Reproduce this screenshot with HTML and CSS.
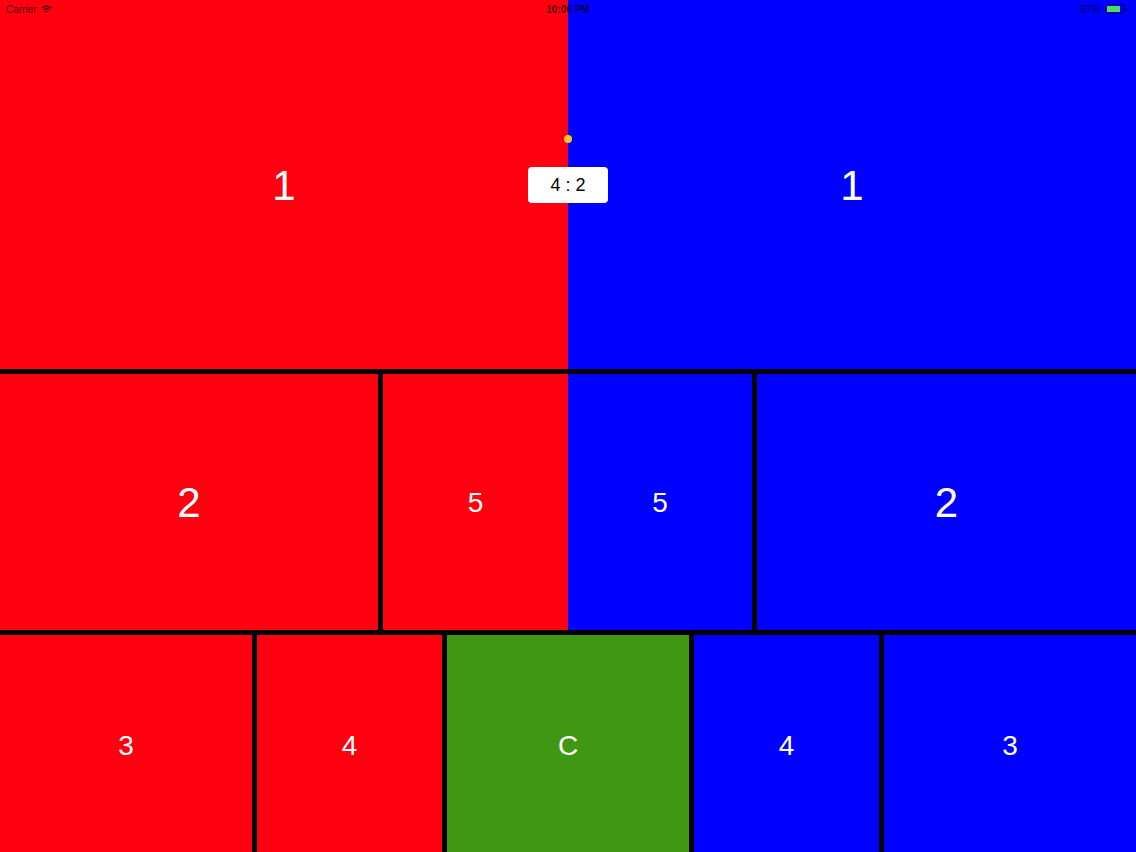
FILE: index.html
```html
<!DOCTYPE html>
<html>
<head>
<meta charset="utf-8">
<link rel="stylesheet" href="styles.css">
</head>
<body>
<div class="screen">
  <div class="board">
    <div class="row row-top">
      <div class="cell red big">1</div>
      <div class="cell blue big">1</div>
    </div>
    <div class="row row-mid">
      <div class="cell red big w-two-l">2</div>
      <div class="pair">
        <div class="cell red mid w-five-r">5</div>
        <div class="cell blue mid w-five-b">5</div>
      </div>
      <div class="cell blue big w-two-r">2</div>
    </div>
    <div class="row row-bot">
      <div class="cell red mid w-three">3</div>
      <div class="cell red mid w-four">4</div>
      <div class="cell green mid w-c">C</div>
      <div class="cell blue mid w-four">4</div>
      <div class="cell blue mid w-three">3</div>
    </div>
  </div>

  <div class="statusbar">
    <div class="sb-left">
      <span>Carrier</span>
      <svg class="wifi" width="11" height="8" viewBox="0 0 11 8">
        <path d="M0.3 2.6 A7.5 7.5 0 0 1 10.7 2.6 L9.6 3.7 A6 6 0 0 0 1.4 3.7 Z" fill="currentColor"/>
        <path d="M2.2 4.5 A4.8 4.8 0 0 1 8.8 4.5 L7.7 5.6 A3.3 3.3 0 0 0 3.3 5.6 Z" fill="currentColor"/>
        <path d="M4.1 6.4 A2 2 0 0 1 6.9 6.4 L5.5 7.8 Z" fill="currentColor"/>
      </svg>
    </div>
    <div class="sb-center">10:06 PM</div>
    <div class="sb-right">
      <span>87%</span>
      <span class="battery"><span class="battery-fill"></span></span>
      <span class="battery-tip"></span>
    </div>
  </div>

  <div class="dot"></div>
  <div class="score">4 : 2</div>
</div>
</body>
</html>
```

FILE: styles.css
```css
html, body {
  margin: 0;
  padding: 0;
}

body {
  font-family: "Liberation Sans", Arial, sans-serif;
  background: #000;
}

.screen {
  position: relative;
  width: 1136px;
  height: 852px;
  overflow: hidden;
  background: #000;
}

.board {
  display: flex;
  flex-direction: column;
  gap: 5px;
  height: 852px;
}

.row {
  display: flex;
  gap: 5px;
}

.row-top {
  height: 369px;
  gap: 0;
}

.row-top .cell {
  flex: 1;
  padding-top: 2px;
}

.row-mid {
  height: 256px;
}

.row-mid .cell {
  padding-top: 2px;
}

.row-bot {
  flex: 1;
}

.row-bot .cell {
  padding-top: 4px;
}

.pair {
  display: flex;
  width: 369px;
}

.cell {
  display: flex;
  align-items: center;
  justify-content: center;
  color: #fff;
  box-sizing: border-box;
}

.red { background: #ff0010; }
.blue { background: #0000fe; }
.green { background: #409714; }

.big {
  font-size: 42px;
}

.mid {
  font-size: 28px;
}

.w-two-l { width: 378px; }
.w-two-r { width: 379px; }
.w-five-r { width: 185px; }
.w-five-b { width: 184px; }
.w-three { width: 252px; }
.w-four { width: 185px; }
.w-c { width: 242px; }

.statusbar {
  position: absolute;
  top: 0;
  left: 0;
  right: 0;
  height: 18px;
  display: flex;
  align-items: center;
  justify-content: space-between;
  padding: 0 6px;
  font-size: 10px;
  color: rgba(0, 0, 0, 0.72);
}

.sb-left {
  display: flex;
  align-items: center;
  gap: 4px;
  width: 120px;
}

.sb-center {
  font-weight: bold;
}

.sb-right {
  display: flex;
  align-items: center;
  justify-content: flex-end;
  width: 120px;
}

.sb-right span:first-child {
  margin-right: 5px;
}

.battery {
  display: inline-block;
  width: 15px;
  height: 6px;
  padding: 1px;
  border: 1px solid rgba(0, 0, 0, 0.6);
  border-radius: 2px;
}

.battery-fill {
  display: block;
  width: 86%;
  height: 100%;
  background: #4cd964;
}

.battery-tip {
  display: inline-block;
  width: 1.5px;
  height: 3px;
  margin-left: 1px;
  margin-right: 3px;
  background: rgba(0, 0, 0, 0.6);
}

.wifi {
  display: block;
}

.dot {
  position: absolute;
  left: 564px;
  top: 135px;
  width: 8px;
  height: 8px;
  border-radius: 50%;
  background: #f5c924;
}

.score {
  position: absolute;
  left: 528px;
  top: 167px;
  width: 80px;
  height: 36px;
  border-radius: 4px;
  background: #fff;
  color: #000;
  font-size: 18px;
  display: flex;
  align-items: center;
  justify-content: center;
}
```
